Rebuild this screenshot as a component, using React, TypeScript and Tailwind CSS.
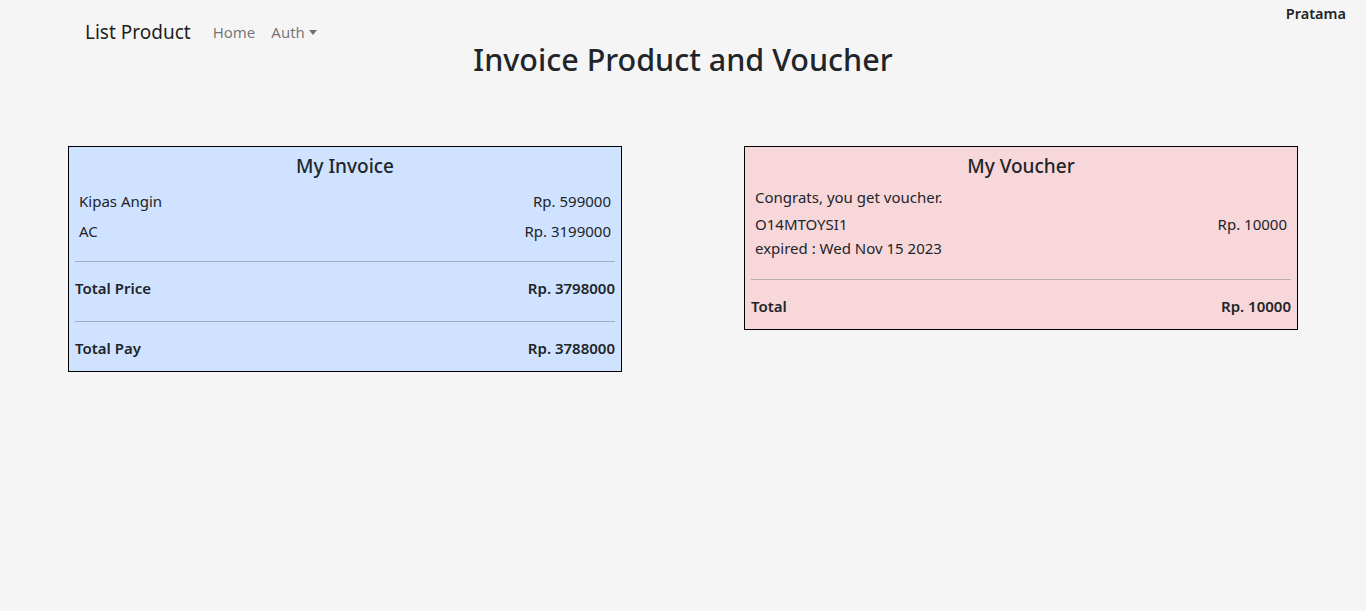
import React from "react";

type Row = { name: string; price: string };

const items: Row[] = [
    { name: "Kipas Angin", price: "Rp. 599000" },
    { name: "AC", price: "Rp. 3199000" },
];

const Navbar: React.FC = () => {
    return (
        <nav className="flex items-center h-[26px] pl-[85px]">
            <span className="text-[19px] leading-[26px] text-black/90 mr-[22px]">List Product</span>
            <a className="text-[15px] text-black/55 mr-4">Home</a>
            <a className="flex items-center text-[15px] text-black/55">
                Auth
                <span className="ml-[4px] mt-[1px] border-t-[5px] border-t-black/55 border-x-[4px] border-x-transparent" />
            </a>
        </nav>
    );
};

const App: React.FC = () => {
    return (
        <div className="relative min-h-screen pt-[19px] bg-[#f5f5f5] text-[#212529] font-['Noto_Sans',sans-serif]">
            <div className="absolute right-[20px] top-[3px] text-[14.5px] font-semibold">Pratama</div>
            <Navbar />
            <h1 className="-mt-[5px] text-center text-[30.5px] leading-[38px] font-medium">
                Invoice Product and Voucher
            </h1>

            <div className="mt-[68px] flex items-start justify-between px-[68px]">
                {/* invoice */}
                <div className="w-[554px] border border-black bg-[#cfe2ff] px-[6px] pt-[7px] pb-[10px]">
                    <h4 className="text-center text-[19px] leading-[24px] font-medium">My Invoice</h4>
                    <div className="mt-2 px-1">
                        {items.map((it) => (
                            <div key={it.name} className="flex justify-between h-[30px] items-center text-[15px]">
                                <span>{it.name}</span>
                                <span>{it.price}</span>
                            </div>
                        ))}
                    </div>
                    <hr className="mt-[15px] border-0 h-px bg-[#9eadbf]" />
                    <div className="flex justify-between pt-[14px] pb-[21px] text-[15px] leading-[24px] font-semibold">
                        <span>Total Price</span>
                        <span>Rp. 3798000</span>
                    </div>
                    <hr className="border-0 h-px bg-[#9eadbf]" />
                    <div className="flex justify-between pt-[14px] pb-px text-[15px] leading-[24px] font-semibold">
                        <span>Total Pay</span>
                        <span>Rp. 3788000</span>
                    </div>
                </div>

                {/* voucher */}
                <div className="w-[554px] border border-black bg-[#f8d7da] px-[6px] pt-[7px] pb-[10px]">
                    <h4 className="text-center text-[19px] leading-[24px] font-medium">My Voucher</h4>
                    <div className="mt-[7px] px-1 text-[15px] leading-[24px]">
                        <p>Congrats, you get voucher.</p>
                        <div className="mt-[3px] flex justify-between">
                            <span>O14MTOYSI1</span>
                            <span>Rp. 10000</span>
                        </div>
                        <p>expired : Wed Nov 15 2023</p>
                    </div>
                    <hr className="mt-[19px] border-0 h-px bg-[#bbaeb0]" />
                    <div className="flex justify-between pt-[14px] pb-px text-[15px] leading-[24px] font-semibold">
                        <span>Total</span>
                        <span>Rp. 10000</span>
                    </div>
                </div>
            </div>
        </div>
    );
};

export default App;
